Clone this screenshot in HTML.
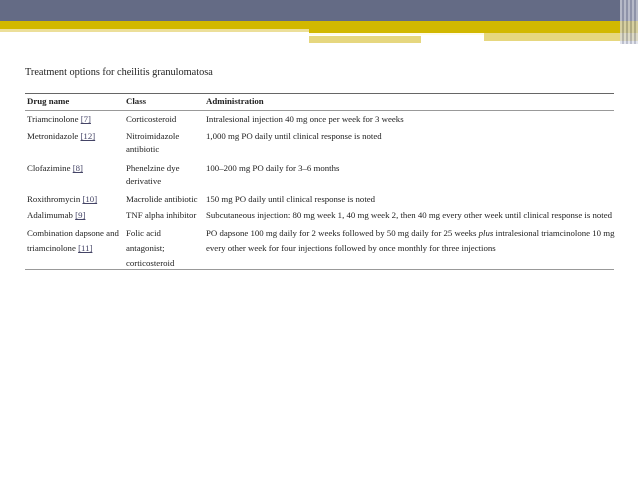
<!DOCTYPE html>
<html><head><meta charset="utf-8"><style>
body{margin:0;width:638px;height:478px;background:#fff;position:relative;overflow:hidden;font-family:"Liberation Serif",serif;color:#222}
.a{position:absolute}
.t{position:absolute;font-size:8.8px;line-height:13px;white-space:nowrap}
.l{color:#446;text-decoration:underline}
b{font-weight:bold}
</style></head><body>
<div class="a" style="left:0;top:0;width:638px;height:21px;background:#646b85"></div>
<div class="a" style="left:0;top:21px;width:638px;height:8px;background:#d2b800"></div>
<div class="a" style="left:0;top:29px;width:310px;height:3px;background:#ecdf9a"></div>
<div class="a" style="left:309px;top:29px;width:329px;height:4px;background:#d2b800"></div>
<div class="a" style="left:309px;top:33px;width:329px;height:2px;background:#fffbe8"></div>
<div class="a" style="left:484px;top:33px;width:154px;height:8px;background:#e6d77f"></div>
<div class="a" style="left:309px;top:36px;width:112px;height:7px;background:#e6d77f"></div>
<div class="a" style="left:620px;top:0;width:18px;height:44px;background:repeating-linear-gradient(90deg,#d9dbe5 0 2px,#a0a4b8 2px 4px);opacity:.7"></div>

<div class="t" style="left:25px;top:66px;font-size:10.3px">Treatment options for cheilitis granulomatosa</div>
<div class="a" style="left:25px;top:93px;width:589px;height:1px;background:#666"></div>
<div class="a" style="left:25px;top:110px;width:589px;height:1px;background:#999"></div>
<div class="a" style="left:25px;top:269px;width:589px;height:1px;background:#999"></div>

<div class="t" style="left:27px;top:95px"><b>Drug name</b></div>
<div class="t" style="left:126px;top:95px"><b>Class</b></div>
<div class="t" style="left:206px;top:95px"><b>Administration</b></div>

<div class="t" style="left:27px;top:113px">Triamcinolone <span class="l">[7]</span></div>
<div class="t" style="left:126px;top:113px">Corticosteroid</div>
<div class="t" style="left:206px;top:113px">Intralesional injection 40 mg once per week for 3 weeks</div>

<div class="t" style="left:27px;top:130px">Metronidazole <span class="l">[12]</span></div>
<div class="t" style="left:126px;top:130px">Nitroimidazole<br>antibiotic</div>
<div class="t" style="left:206px;top:130px">1,000 mg PO daily until clinical response is noted</div>

<div class="t" style="left:27px;top:162px">Clofazimine <span class="l">[8]</span></div>
<div class="t" style="left:126px;top:162px">Phenelzine dye<br>derivative</div>
<div class="t" style="left:206px;top:162px">100–200 mg PO daily for 3–6 months</div>

<div class="t" style="left:27px;top:193px">Roxithromycin <span class="l">[10]</span></div>
<div class="t" style="left:126px;top:193px">Macrolide antibiotic</div>
<div class="t" style="left:206px;top:193px">150 mg PO daily until clinical response is noted</div>

<div class="t" style="left:27px;top:209px">Adalimumab <span class="l">[9]</span></div>
<div class="t" style="left:126px;top:209px">TNF alpha inhibitor</div>
<div class="t" style="left:206px;top:209px">Subcutaneous injection: 80 mg week 1, 40 mg week 2, then 40 mg every other week until clinical response is noted</div>

<div class="t" style="left:27px;top:226px;line-height:15px">Combination dapsone and<br>triamcinolone <span class="l">[11]</span></div>
<div class="t" style="left:126px;top:226px;line-height:15px">Folic acid<br>antagonist;<br>corticosteroid</div>
<div class="t" style="left:206px;top:226px;line-height:15px">PO dapsone 100 mg daily for 2 weeks followed by 50 mg daily for 25 weeks <i>plus</i> intralesional triamcinolone 10 mg<br>every other week for four injections followed by once monthly for three injections</div>
</body></html>
